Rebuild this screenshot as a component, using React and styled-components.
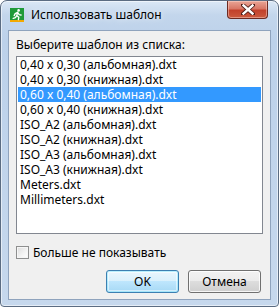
import React from "react";
import styled, { createGlobalStyle, css } from "styled-components";

const Global = createGlobalStyle`
  html, body { margin: 0; padding: 0; background: #ffffff; }
  body { font-family: "Noto Sans", "Segoe UI", sans-serif; font-size: 12px; color: #000; }
  * { box-sizing: border-box; }
`;

const Window = styled.div`
  width: 279px;
  height: 307px;
  border: 1px solid #5b6c82;
  border-radius: 7px 7px 4px 4px;
  background: linear-gradient(180deg, #dbe8f6 0px, #c3d6ec 14px, #bcd1ea 40px, #c6d8ed 100%);
  box-shadow: inset 0 0 0 1px rgba(255, 255, 255, 0.55);
  display: flex;
  flex-direction: column;
  padding: 0 7px 6px 7px;
`;

const TitleBar = styled.div`
  height: 29px;
  display: flex;
  align-items: flex-start;
`;

const AppIcon = styled.svg`
  width: 14px;
  height: 14px;
  margin: 7px 0 0 2px;
  flex: none;
`;

const Title = styled.div`
  margin: 6px 0 0 7px;
  font-size: 12px;
  line-height: 16px;
  color: #000;
  text-shadow: 0 0 6px rgba(255, 255, 255, 0.9);
`;

const CloseButton = styled.div`
  margin-left: auto;
  margin-right: 3px;
  width: 41px;
  height: 18px;
  border: 1px solid #6b2a22;
  border-top: none;
  border-radius: 0 0 4px 4px;
  background: linear-gradient(180deg, #e9a596 0%, #d87766 45%, #c2412b 55%, #cb5a3e 100%);
  box-shadow: inset 0 0 0 1px rgba(255, 220, 210, 0.45);
  display: flex;
  align-items: center;
  justify-content: center;
`;

const Client = styled.div`
  flex: 1;
  background: #f0f0f0;
  border: 1px solid #8fa3bd;
  display: flex;
  flex-direction: column;
  padding: 6px 7px 0 7px;
`;

const Label = styled.div`
  line-height: 16px;
  height: 19px;
`;

const List = styled.div`
  height: 178px;
  background: #fff;
  border: 1px solid #828790;
  padding: 0 1px;
  display: flex;
  flex-direction: column;
`;

const Item = styled.div`
  height: 15px;
  line-height: 15px;
  padding-left: 2px;
  white-space: nowrap;
  ${(p) =>
    p.$selected &&
    css`
      background: #3399ff;
      color: #fff;
    `}
`;

const CheckRow = styled.label`
  display: flex;
  align-items: center;
  gap: 4px;
  margin-top: 11px;
  height: 15px;
`;

const CheckBox = styled.span`
  width: 13px;
  height: 13px;
  border: 1px solid #8e8f8f;
  background: linear-gradient(135deg, #dcdcdc 0%, #f4f4f4 60%, #ffffff 100%);
  box-shadow: inset 0 0 0 1px #f6f6f6;
  flex: none;
`;

const Buttons = styled.div`
  display: flex;
  justify-content: flex-end;
  gap: 9px;
  margin-top: 10px;
  padding-right: 2px;
`;

const Button = styled.div`
  width: 73px;
  height: 23px;
  border: 1px solid #707070;
  border-radius: 3px;
  background: linear-gradient(180deg, #f2f2f2 0%, #ebebeb 49%, #dddddd 50%, #cfcfcf 100%);
  box-shadow: inset 0 0 0 1px rgba(255, 255, 255, 0.8);
  display: flex;
  align-items: center;
  justify-content: center;
  line-height: 15px;
  ${(p) =>
    p.$default &&
    css`
      border-color: #3c7fb1;
      background: linear-gradient(180deg, #eaf6fd 0%, #d9f0fc 49%, #bee6fd 50%, #a7d9f5 100%);
      box-shadow: inset 0 0 0 1px #48d8fb55, inset 0 0 0 2px rgba(255,255,255,0.5);
    `}
`;

const items = [
  "0,40 x 0,30 (альбомная).dxt",
  "0,40 x 0,30 (книжная).dxt",
  "0,60 x 0,40 (альбомная).dxt",
  "0,60 x 0,40 (книжная).dxt",
  "ISO_A2 (альбомная).dxt",
  "ISO_A2 (книжная).dxt",
  "ISO_A3 (альбомная).dxt",
  "ISO_A3 (книжная).dxt",
  "Meters.dxt",
  "Millimeters.dxt",
];

export default function App() {
  return (
    <>
      <Global />
      <Window>
        <TitleBar>
          <AppIcon viewBox="0 0 14 14">
            <rect x="0" y="0" width="14" height="14" fill="#1f9a3a" />
            <rect x="0" y="12" width="14" height="2" fill="#f2a900" />
            <circle cx="8.6" cy="2.4" r="1.3" fill="#fff" />
            <path
              d="M7.6 4.3 L5.2 5.6 L4.2 7.6 M7.6 4.3 L6.8 7.6 L8.8 9.2 L8.4 11.6 M6.8 7.6 L5.4 9.6 L3.2 10.4 M7.6 4.3 L9.2 6.6 L11 7"
              stroke="#fff"
              strokeWidth="1.4"
              fill="none"
              strokeLinecap="round"
              strokeLinejoin="round"
            />
          </AppIcon>
          <Title>Использовать шаблон</Title>
          <CloseButton>
            <svg width="14" height="11" viewBox="0 0 14 11">
              <path
                d="M2 1 L12 10 M12 1 L2 10"
                stroke="#4a1a14"
                strokeWidth="4"
                strokeLinecap="square"
              />
              <path
                d="M2.5 1.5 L11.5 9.5 M11.5 1.5 L2.5 9.5"
                stroke="#ffffff"
                strokeWidth="2.4"
                strokeLinecap="square"
              />
            </svg>
          </CloseButton>
        </TitleBar>
        <Client>
          <Label>Выберите шаблон из списка:</Label>
          <List>
            {items.map((t, i) => (
              <Item key={t} $selected={i === 2}>
                {t}
              </Item>
            ))}
          </List>
          <CheckRow>
            <CheckBox />
            <span>Больше не показывать</span>
          </CheckRow>
          <Buttons>
            <Button $default>OK</Button>
            <Button>Отмена</Button>
          </Buttons>
        </Client>
      </Window>
    </>
  );
}
